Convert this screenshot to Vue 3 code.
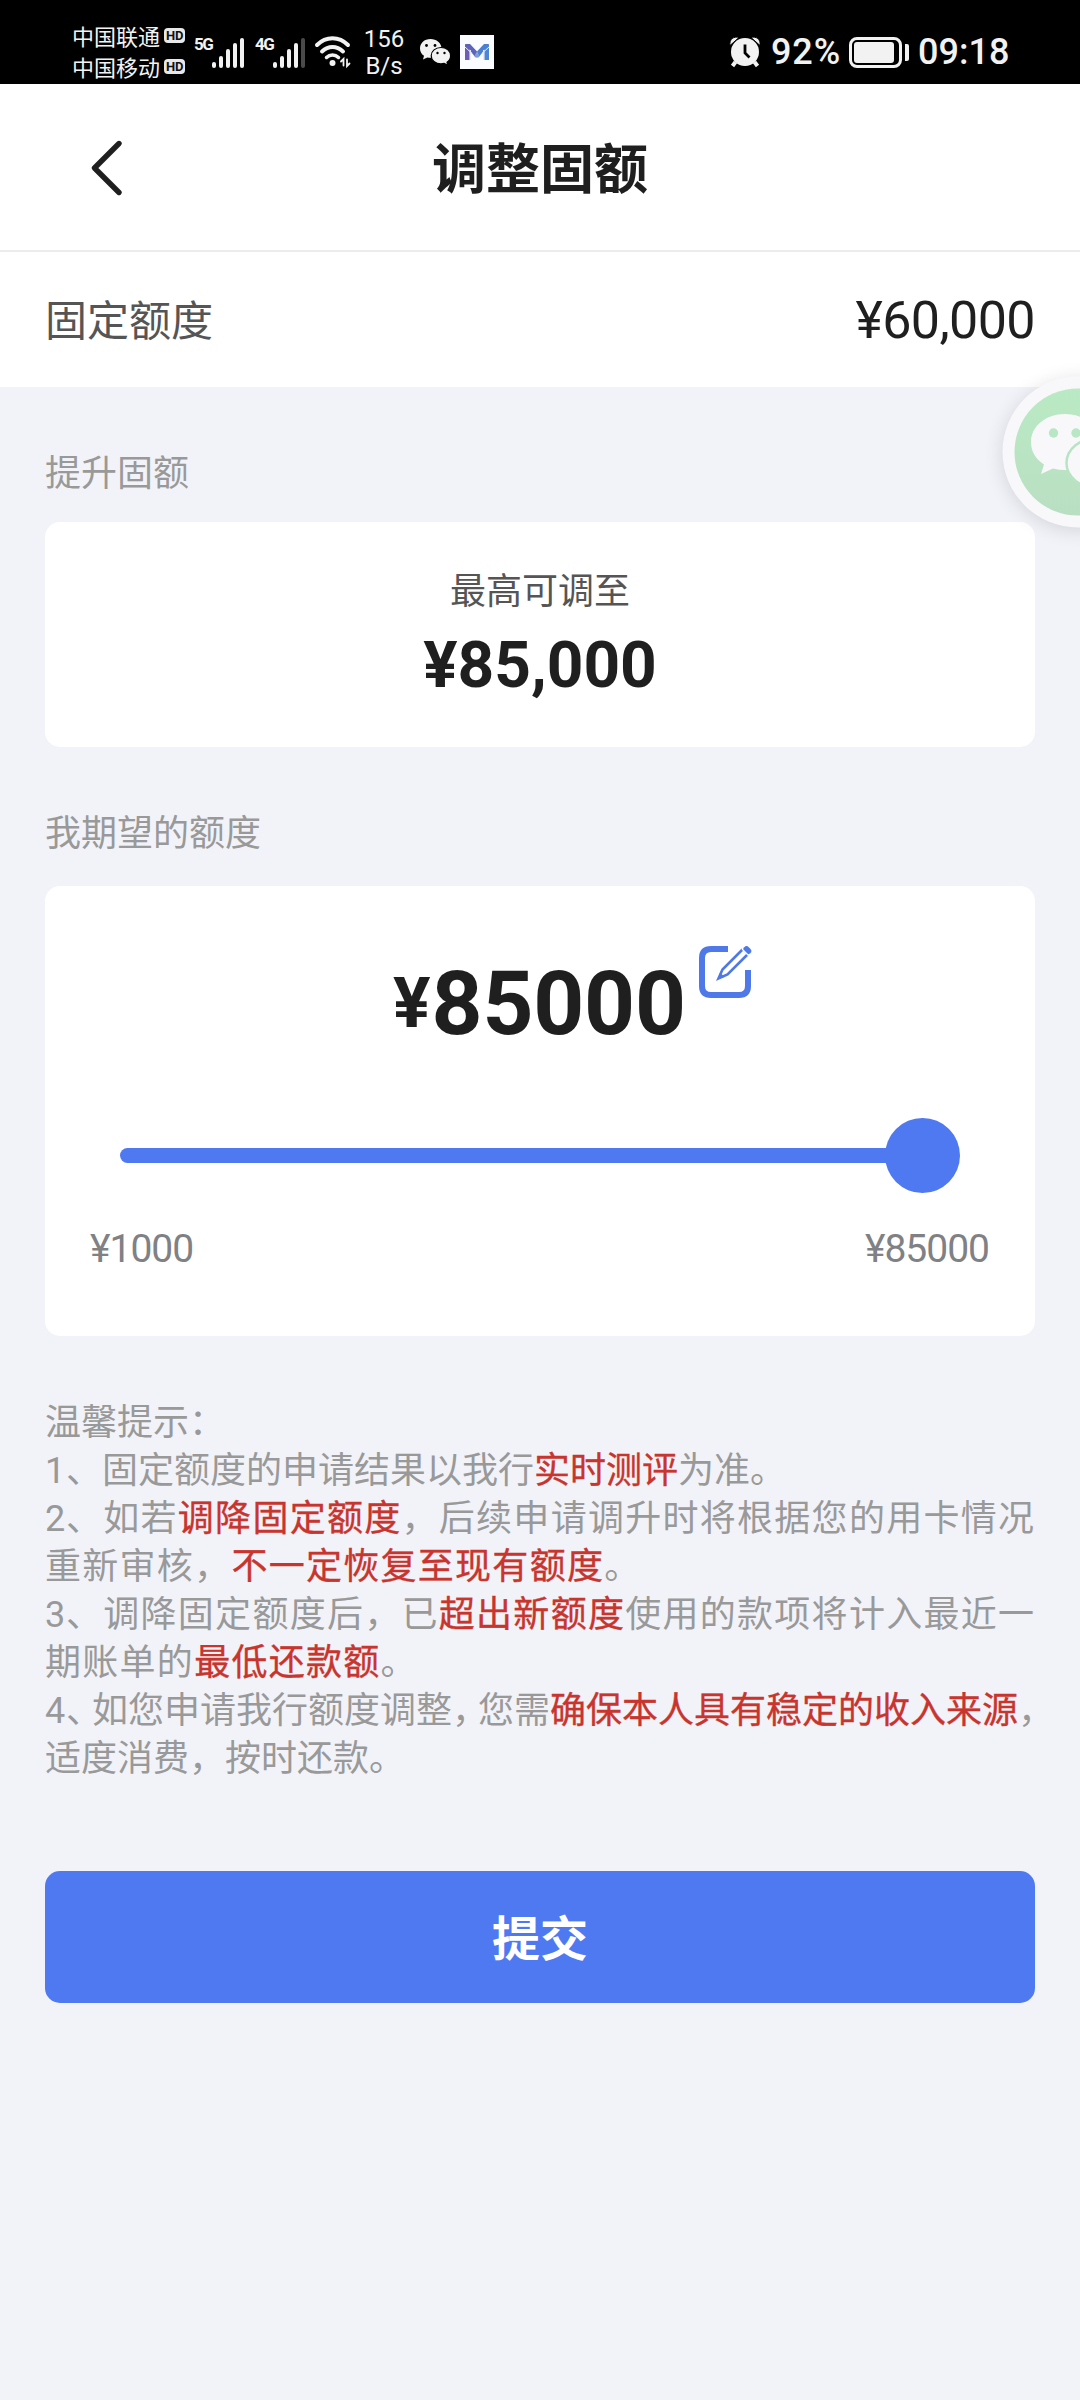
<script setup>
import { ref, computed } from 'vue'

const carriers = ['中国联通', '中国移动']
const networks = [
  { label: '5G', active: 5 },
  { label: '4G', active: 4 },
]
const barHeights = [6, 12, 19, 25, 30]

const min = 1000
const max = 85000
const amount = ref(85000)
const percent = computed(() => ((amount.value - min) / (max - min)) * 100)

const tips = [
  { cls: '', parts: [{ t: '温馨提示：' }] },
  { cls: '', parts: [{ t: '1', k: 'num' }, { t: '、固定额度的申请结果以我行' }, { t: '实时测评', k: 'hot' }, { t: '为准。' }] },
  { cls: 'wide', parts: [{ t: '2', k: 'num' }, { t: '、如若' }, { t: '调降固定额度', k: 'hot' }, { t: '，后续申请调升时将根据您的用卡情况' }] },
  { cls: 'wide', parts: [{ t: '重新审核，' }, { t: '不一定恢复至现有额度', k: 'hot' }, { t: '。' }] },
  { cls: 'wide', parts: [{ t: '3', k: 'num' }, { t: '、调降固定额度后，已' }, { t: '超出新额度', k: 'hot' }, { t: '使用的款项将计入最近一' }] },
  { cls: 'wide', parts: [{ t: '期账单的' }, { t: '最低还款额', k: 'hot' }, { t: '。' }] },
  { cls: '', parts: [{ t: '4', k: 'num' }, { t: '、', k: 'tight' }, { t: '如您申请我行额度调整' }, { t: '，', k: 'tight' }, { t: '您需' }, { t: '确保本人具有稳定的收入来源', k: 'hot' }, { t: '，', k: 'tight' }] },
  { cls: '', parts: [{ t: '适度消费，按时还款。' }] },
]
</script>

<template>
  <div class="screen">
    <div class="status">
      <div class="carriers">
        <div v-for="c in carriers" :key="c" class="carrier">
          <span>{{ c }}</span><b class="hd">HD</b>
        </div>
      </div>
      <div v-for="n in networks" :key="n.label" class="network">
        <span class="gen">{{ n.label }}</span>
        <div class="bars">
          <i v-for="(h, i) in barHeights" :key="i" :class="{ off: i >= n.active }" :style="{ height: h + 'px' }"></i>
        </div>
      </div>
      <svg class="wifi" width="38" height="34" viewBox="0 0 38 34" fill="none" stroke="#f2f2f2" stroke-width="4" stroke-linecap="round">
        <path d="M3 10C12 1 25 1 34 10" />
        <path d="M8 16.500C14.500 10.500 22.500 10.500 29 16.500" />
        <path d="M12.500 22.500C16 19 21 19 24.500 22.500" stroke-width="3.500" />
        <circle cx="18.500" cy="28" r="3" fill="#f2f2f2" stroke="none" />
        <path d="M29.500 30.500v-6.500l-2.500 2.500M33 24.500v6.500l2.500-2.500" stroke-width="1.800" />
      </svg>
      <div class="rate"><span>156</span><span class="unit">B/s</span></div>
      <svg class="chat" width="32" height="28" viewBox="0 0 32 28">
        <path d="M11.500 1C5.200 1 1 5.200 1 10.400c0 3.200 1.600 5.800 4 7.400L4 21.600l4.300-2.200c1 .3 2.100.4 3.200.4 6 0 11-4.100 11-9.400S17.500 1 11.500 1z" fill="#f2f2f2" />
        <path d="M22 9.500c-5.600 0-9.800 3.600-9.800 8.200s4.200 8.200 9.800 8.200c1.100 0 2.200-.2 3.200-.5l3.600 1.800-.8-3c2.300-1.500 3.600-3.700 3.600-6.500 0-4.600-4-8.200-9.600-8.200z" fill="#f2f2f2" stroke="#000" stroke-width="1.200" />
        <g fill="#000"><circle cx="7.500" cy="7.500" r="1.400" /><circle cx="16" cy="7.500" r="1.400" /><circle cx="18.500" cy="15" r="1.200" /><circle cx="25.500" cy="15" r="1.200" /></g>
      </svg>
      <svg class="mail" width="34" height="34" viewBox="0 0 34 34">
        <rect width="34" height="34" fill="#fbfcff" />
        <path d="M5 9.500l4.500-.5v16H5z" fill="#6a5fb4" />
        <path d="M24.500 9l4.500.5V25h-4.500z" fill="#4f86d4" />
        <path d="M5 9h5l7 7.500L15.500 22.500z" fill="#5d62ba" />
        <path d="M29 9h-5l-7 7.500L18.500 22.500z" fill="#4b7fd0" />
        <path d="M5 12l6.500 6M29 12l-6.500 6M10.500 15v10M23.500 15v10" stroke="#e6ebfb" stroke-width="1" />
        <circle cx="17" cy="20.500" r="2.300" fill="#7a9be0" />
      </svg>
      <svg class="alarm" width="32" height="32" viewBox="0 0 32 32" fill="#f2f2f2">
        <circle cx="16" cy="16" r="14" />
        <path d="M1 9.500C0 3 5 0 10 1.500zM31 9.500C32 3 27 0 22 1.500z" stroke="#000" stroke-width="1" />
        <path d="M6.500 26L3.500 30M25.500 26l3 4" stroke="#f2f2f2" stroke-width="4" />
        <path d="M16 8.500V17l4.500 4.500" fill="none" stroke="#000" stroke-width="2.800" />
      </svg>
      <span class="pct">92%</span>
      <div class="battery"><div class="shell"><div class="charge"></div></div><div class="nub"></div></div>
      <span class="clock">09:18</span>
    </div>

    <header class="nav">
      <svg class="back" width="36" height="60" viewBox="0 0 36 60" fill="none" stroke="#1f1f1f" stroke-width="5.400" stroke-linecap="round" stroke-linejoin="round">
        <path d="M31 5.500L6.500 30L31 54.500" />
      </svg>
      <h1>调整固额</h1>
    </header>

    <div class="row">
      <span class="row-label">固定额度</span>
      <span class="row-value">¥60,000</span>
      <svg class="float" width="200" height="200" viewBox="0 0 200 200">
        <defs>
          <linearGradient id="mint" x1="0" y1="0" x2="0" y2="1">
            <stop offset="0" stop-color="#b9eac4" /><stop offset="1" stop-color="#b9dfc2" />
          </linearGradient>
          <filter id="soft" x="-30%" y="-30%" width="160%" height="160%"><feGaussianBlur stdDeviation="10" /></filter>
        </defs>
        <circle cx="100" cy="103" r="75" fill="#000" opacity=".13" filter="url(#soft)" />
        <circle cx="100" cy="100" r="75.500" fill="#f8f8fb" />
        <circle cx="100" cy="100" r="63.500" fill="url(#mint)" />
        <path d="M87 62C67.500 62 53 74.500 53 90c0 9.500 4.500 17 13 22.500l-3 9.500 12-5.500c4 1 8 1.500 12 1.500 19.500 0 34-12.500 34-28S106.500 62 87 62z" fill="#f8f8fb" />
        <ellipse cx="119" cy="111" rx="30.500" ry="25" fill="#f8f8fb" stroke="#b9e4c3" stroke-width="2.500" />
        <circle cx="75.500" cy="81" r="4.700" fill="#b9e6c3" /><circle cx="98" cy="81" r="4.700" fill="#b9e6c3" />
      </svg>
    </div>

    <main>
      <h2 class="first">提升固额</h2>
      <section class="card limit">
        <span class="limit-label">最高可调至</span>
        <strong>¥85,000</strong>
      </section>

      <h2 class="second">我期望的额度</h2>
      <section class="card expect">
        <div class="amount">
          <span class="yen">¥</span><span class="digits">{{ amount }}</span>
          <svg class="edit" width="54" height="54" viewBox="0 0 54 54" fill="none" stroke="#4f79e8">
            <path d="M30 4H13Q4 4 4 13V41Q4 50 13 50H41Q50 50 50 41V25" stroke-width="6" />
            <path d="M44.500 4.500L24.500 24.500L20.500 33.500L29.500 29.500L49.500 9.500" stroke-width="2.600" />
            <path d="M48.500 4.500L50 6" stroke-width="6.500" stroke-linecap="round" />
            <path d="M44 4L50.500 10.500" stroke="#fff" stroke-width="1.300" />
            <path d="M20 34l2-6.500 4.500 4.500z" fill="#4f79e8" stroke="none" />
          </svg>
        </div>
        <div class="slider">
          <div class="fill" :style="{ width: percent + '%' }"></div>
          <div class="thumb"></div>
        </div>
        <div class="range"><span>¥{{ min }}</span><span>¥{{ max }}</span></div>
      </section>

      <div class="tips">
        <p v-for="(line, i) in tips" :key="i" :class="line.cls"><span v-for="(p, j) in line.parts" :key="j" :class="p.k">{{ p.t }}</span></p>
      </div>

      <button type="button">提交</button>
    </main>
  </div>
</template>

<style>
body { background: #f2f3f8; }
</style>

<style scoped>
.screen {
  width: 1080px;
  height: 2400px;
  overflow: hidden;
  background: #f2f3f8;
  font-family: "Noto Sans CJK SC", sans-serif;
  color: #1f1f1f;
}
.status {
  height: 84px;
  box-sizing: border-box;
  background: #000;
  color: #f2f2f2;
  display: flex;
  align-items: flex-start;
  padding-left: 72px;
  font-family: Roboto, sans-serif;
}
.carriers { width: 122px; padding-top: 20px; }
.carrier {
  display: flex;
  align-items: center;
  height: 31px;
  font: 22px/31px "Noto Sans CJK SC", sans-serif;
}
.hd {
  margin-left: 4px;
  width: 21px;
  height: 15px;
  border-radius: 4px;
  background: #e8e8e8;
  color: #111;
  text-align: center;
  font: 700 13px/15px Roboto, sans-serif;
  letter-spacing: -.3px;
}
.network { width: 61px; display: flex; padding-top: 37px; }
.gen { width: 18px; font: 700 17px/14px Roboto, sans-serif; letter-spacing: -1.400px; }
.bars { display: flex; align-items: flex-end; gap: 3px; height: 31px; }
.bars i { width: 4px; border-radius: 2px; background: #f2f2f2; }
.bars i.off { background: #4a4a4a; }
.wifi { margin: 35px 0 0 -2px; }
.rate { width: 52px; margin-left: 6px; padding-top: 25px; display: flex; flex-direction: column; align-items: center; font-size: 24px; line-height: 28px; }
.unit { line-height: 26px; }
.chat { margin: 38px 0 0 9px; }
.mail { margin: 35px 0 0 9px; }
.alarm { margin: 36px 0 0 235px; }
.pct { width: 78px; margin-left: 10px; padding-top: 31px; font-size: 36px; line-height: 42px; font-weight: 500; letter-spacing: .9px; }
.battery { display: flex; align-items: center; margin-top: 37px; gap: 3px; }
.shell { width: 53px; height: 31px; box-sizing: border-box; border: 3px solid #f2f2f2; border-radius: 8px; padding: 2px 5px 2px 2px; }
.charge { height: 21px; border-radius: 3px; background: #f2f2f2; }
.nub { width: 4px; height: 17px; border-radius: 0 2px 2px 0; background: #f2f2f2; }
.clock { margin-left: 9px; padding-top: 31px; font-size: 36px; line-height: 42px; font-weight: 500; }

.nav {
  height: 168px;
  box-sizing: border-box;
  border-bottom: 2px solid #ececee;
  background: #fff;
  display: flex;
  align-items: center;
  padding: 1px 88px 0;
}
.nav h1 { flex: 1; margin: 0 36px 3px 0; text-align: center; font-size: 54px; line-height: 80px; font-weight: 700; }
.row {
  position: relative;
  height: 135px;
  background: #fff;
  display: flex;
  align-items: center;
  justify-content: space-between;
  padding: 0 45px;
}
.row-label { font-size: 42px; line-height: 60px; margin-bottom: 3px; color: #555; }
.row-value { font: 52px/60px Roboto, sans-serif; letter-spacing: -.6px; padding-top: 3px; }
.float { position: absolute; left: 978px; top: 100px; }

main { display: flex; flex-direction: column; padding: 0 45px; }
h2 { margin: 0; font-size: 36px; line-height: 50px; font-weight: 400; color: #999; }
.first { padding: 58px 0 27px; }
.second { padding: 58px 0 31px; }
.card { background: #fff; border-radius: 15px; box-sizing: border-box; }
.limit { height: 225px; display: flex; flex-direction: column; align-items: center; padding-top: 41px; }
.limit-label { font-size: 36px; line-height: 50px; color: #555; }
.limit strong { font: 700 64px/76px Roboto, sans-serif; margin-top: 15px; }
.expect { height: 450px; padding: 60px 45px 0; }
.amount { display: flex; align-items: baseline; height: 172px; padding-left: 303px; font-family: Roboto, sans-serif; font-weight: 700; }
.yen { font-size: 70px; transform: translateY(-7px); }
.digits { font-size: 89px; line-height: 115px; margin-left: 1px; letter-spacing: -.2px; }
.edit { align-self: flex-start; margin: -1px 0 0 12px; }
.slider { display: flex; align-items: center; height: 75px; padding: 0 68px 0 30px; }
.fill { height: 15px; border-radius: 8px; background: #4f79f1; }
.thumb { flex: none; width: 75px; height: 75px; margin: 0 -38px 0 -37px; border-radius: 50%; background: #4f79f1; }
.range { display: flex; justify-content: space-between; margin: 33px 1px 0 0; font: 39px/46px Roboto, sans-serif; letter-spacing: -1px; color: #808185; }
.tips { padding-top: 59px; font-size: 36px; color: #999; }
.tips p { margin: 0; height: 48px; line-height: 48px; white-space: nowrap; }
.tips .wide { letter-spacing: 1.280px; }
.tips .num { display: inline-block; width: 21px; font-family: Roboto, sans-serif; letter-spacing: 0; }
.tips .hot { color: #c8342e; -webkit-text-stroke: .35px #c8342e; }
.tips .tight { display: inline-block; width: 26px; font-feature-settings: "halt"; }
button { height: 132px; margin-top: 92px; padding: 0 0 4px; border: 0; border-radius: 15px; background: #4f79f1; color: #fff; font: 700 48px/128px "Noto Sans CJK SC", sans-serif; }
</style>
